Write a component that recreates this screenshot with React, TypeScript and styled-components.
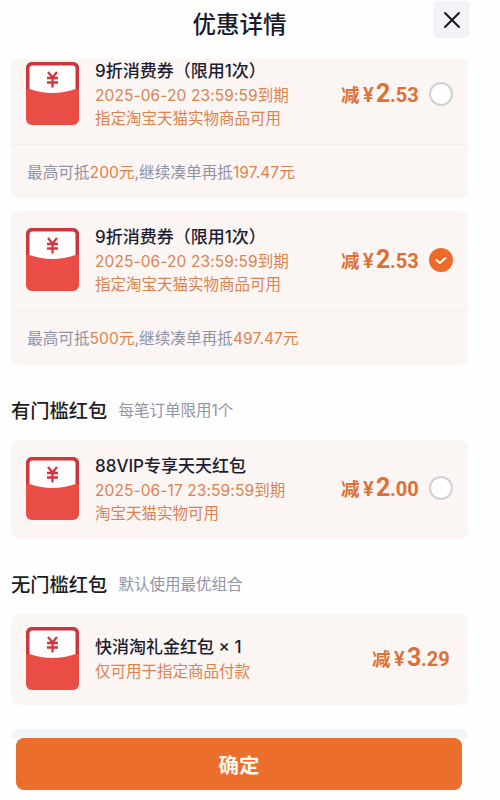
import React, { useState } from "react";
import styled, { createGlobalStyle } from "styled-components";

const GlobalStyle = createGlobalStyle`
  * {
    box-sizing: border-box;
  }
  body {
    margin: 0;
    background-color: #fefefe;
    font-family: Inter, "Noto Sans CJK SC", sans-serif;
  }
`;

const Sheet = styled.div`
  display: flex;
  flex-direction: column;
  width: 479px;
  height: 800px;
  overflow: hidden;
`;

const Header = styled.header`
  display: grid;
  grid-template-columns: 37px 1fr 37px;
  flex: none;
  height: 59px;
  padding: 1px 9px 0;
`;

const Heading = styled.h1`
  grid-column: 2;
  margin: 0;
  text-align: center;
  font-size: 23.5px;
  font-weight: 500;
  line-height: 48px;
  color: #171a2c;
`;

const CloseButton = styled.button`
  display: flex;
  align-items: center;
  justify-content: center;
  width: 37px;
  height: 37px;
  padding: 0;
  border: 0;
  border-radius: 5px;
  background-color: #f2f3f8;
`;

const List = styled.main`
  display: flex;
  flex-direction: column;
  flex: none;
  height: 679px;
  padding: 0 11px;
  overflow: hidden;
`;

const Card = styled.section<{ $clipped?: boolean }>`
  flex: none;
  width: 457px;
  margin-top: ${p => (p.$clipped ? "-14px" : "0")};
  margin-bottom: 12px;
  border-radius: 8px;
  background-color: #fbf5f3;
`;

const CardBody = styled.div<{ $height: number }>`
  display: flex;
  align-items: center;
  height: ${p => p.$height}px;
  padding: 0 15px 2px;
`;

const Info = styled.div`
  flex: 1;
  padding: 1px 0 0 16px;
  white-space: nowrap;
`;

const CouponName = styled.div`
  font-size: 17px;
  font-weight: 500;
  line-height: 26px;
  color: #1b1d30;
`;

const Expiry = styled.div`
  font-size: 15.5px;
  line-height: 23px;
  letter-spacing: 0.1px;
  color: #db8350;
`;

const Scope = styled.div`
  font-size: 15.5px;
  line-height: 23px;
  color: #db8350;
`;

const Price = styled.div<{ $alone: boolean }>`
  display: flex;
  align-items: baseline;
  margin-right: ${p => (p.$alone ? "4px" : "0")};
  padding-top: 2px;
  font-family: Roboto, "Noto Sans CJK SC", sans-serif;
  font-weight: 700;
  line-height: 28px;
  color: #dd6f34;
`;

const Minus = styled.span`
  width: 22px;
  font-size: 18.5px;
`;

const Yen = styled.span`
  width: 13px;
  font-size: 20px;
  font-weight: 600;
`;

const Whole = styled.span`
  width: 14px;
  font-size: 25px;
`;

const Cents = styled.span`
  width: 28px;
  font-size: 20px;
`;

const Radio = styled.button<{ $checked: boolean }>`
  display: flex;
  align-items: center;
  justify-content: center;
  width: 24px;
  height: 24px;
  margin-left: 11px;
  padding: 0;
  border: ${p => (p.$checked ? "0" : "2px solid #cfd1d3")};
  border-radius: 50%;
  background-color: ${p => (p.$checked ? "#ee6a2b" : "#fff")};
`;

const Note = styled.div`
  height: 55px;
  padding-left: 16px;
  border-top: 1px solid #f2eceb;
  font-size: 15.6px;
  line-height: 55px;
  letter-spacing: 0.05px;
  color: #9092a5;
`;

const Highlight = styled.span`
  color: #db8350;
`;

const SectionTitle = styled.div<{ $height: number }>`
  display: flex;
  align-items: center;
  flex: none;
  gap: 11px;
  height: ${p => p.$height}px;
  margin-top: -12px;
  padding-top: 15px;
`;

const SectionName = styled.h2`
  margin: 0;
  font-size: 19.3px;
  font-weight: 500;
  color: #1c1c20;
`;

const SectionHint = styled.span`
  margin-top: -2px;
  font-size: 15.5px;
  color: #9294a7;
`;

const NextCard = styled.div`
  flex: none;
  height: 60px;
  margin-top: 12px;
  border-radius: 8px;
  background-color: #f2f5f8;
`;

const ConfirmButton = styled.button`
  flex: none;
  width: 446px;
  height: 52px;
  margin-left: 16px;
  padding: 0;
  border: 0;
  border-radius: 8px;
  background-color: #eb6e2d;
  font-family: inherit;
  font-size: 20.5px;
  font-weight: 700;
  color: #fff8f0;
`;

const Envelope = () => (
  <svg width="53" height="63" viewBox="0 0 53 63">
    <rect width="53" height="63" rx="6" fill="#e94d45" />
    <path d="M0 27V6a6 6 0 0 1 6-6h41a6 6 0 0 1 6 6v21z" fill="#ca373c" />
    <path
      d="M3.5 6.5a3 3 0 0 1 3-3h40a3 3 0 0 1 3 3v20.500q-23 8-46 0z"
      fill="#fffdfd"
    />
    <path
      d="M22 10l4.500 5.500 4.500-5.500M21 16h11M21 20.500h11M26.500 15.500v10"
      fill="none"
      stroke="#d8343c"
      strokeWidth="2.300"
    />
  </svg>
);

const Check = () => (
  <svg width="24" height="24" viewBox="0 0 24 24" fill="none">
    <path
      d="M7.500 12l3.300 3 5.700-5"
      stroke="#fff"
      strokeWidth="2"
      strokeLinecap="round"
      strokeLinejoin="round"
    />
  </svg>
);

interface CouponProps {
  name: string;
  expiry?: string;
  scope: string;
  amount: string;
  height?: number;
  clipped?: boolean;
  checked?: boolean;
  onSelect?: () => void;
  children?: React.ReactNode;
}

function Coupon({
  name,
  expiry,
  scope,
  amount,
  height = 99,
  clipped,
  checked = false,
  onSelect,
  children
}: CouponProps) {
  const [whole, cents] = amount.split(".");
  return (
    <Card $clipped={clipped}>
      <CardBody $height={height}>
        <Envelope />
        <Info>
          <CouponName>{name}</CouponName>
          {expiry && <Expiry>{expiry}到期</Expiry>}
          <Scope>{scope}</Scope>
        </Info>
        <Price $alone={!onSelect}>
          <Minus>减</Minus>
          <Yen>¥</Yen>
          <Whole>{whole}</Whole>
          <Cents>.{cents}</Cents>
        </Price>
        {onSelect && (
          <Radio $checked={checked} onClick={onSelect}>
            {checked && <Check />}
          </Radio>
        )}
      </CardBody>
      {children && <Note>{children}</Note>}
    </Card>
  );
}

const coupons = [
  { limit: "200元", rest: "197.47元" },
  { limit: "500元", rest: "497.47元" }
];

function App() {
  const [selected, setSelected] = useState(1);
  const [vip, setVip] = useState(false);

  return (
    <Sheet>
      <GlobalStyle />
      <Header>
        <Heading>优惠详情</Heading>
        <CloseButton aria-label="关闭">
          <svg width="18" height="18" viewBox="0 0 18 18">
            <path
              d="M2 2l14 14M16 2L2 16"
              stroke="#17181e"
              strokeWidth="2"
              strokeLinecap="round"
            />
          </svg>
        </CloseButton>
      </Header>
      <List>
        {coupons.map((c, i) => (
          <Coupon
            key={i}
            name="9折消费券（限用1次）"
            expiry="2025-06-20 23:59:59"
            scope="指定淘宝天猫实物商品可用"
            amount="2.53"
            clipped={i === 0}
            checked={selected === i}
            onSelect={() => setSelected(i)}
          >
            最高可抵<Highlight>{c.limit}</Highlight>,继续凑单再抵
            <Highlight>{c.rest}</Highlight>
          </Coupon>
        ))}
        <SectionTitle $height={74.5}>
          <SectionName>有门槛红包</SectionName>
          <SectionHint>每笔订单限用1个</SectionHint>
        </SectionTitle>
        <Coupon
          name="88VIP专享天天红包"
          expiry="2025-06-17 23:59:59"
          scope="淘宝天猫实物可用"
          amount="2.00"
          checked={vip}
          onSelect={() => setVip(!vip)}
        />
        <SectionTitle $height={75}>
          <SectionName>无门槛红包</SectionName>
          <SectionHint>默认使用最优组合</SectionHint>
        </SectionTitle>
        <Coupon
          name="快消淘礼金红包 × 1"
          scope="仅可用于指定商品付款"
          amount="3.29"
          height={91}
        />
        <NextCard />
      </List>
      <ConfirmButton>确定</ConfirmButton>
    </Sheet>
  );
}

export default App;
